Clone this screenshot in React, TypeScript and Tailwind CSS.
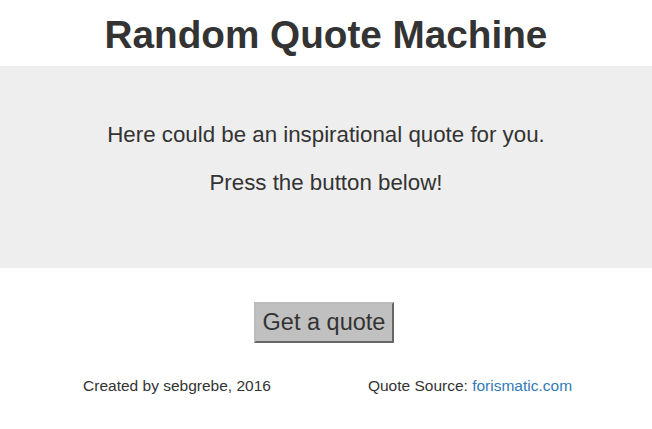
const App = () => {
    return (
        <div className="min-h-screen bg-white text-[#333] font-['Helvetica_Neue','Liberation_Sans',Arial,sans-serif]">
            <h1 className="pt-[13px] pb-[10px] text-center text-[38.7px] leading-[43px] font-bold">
                Random Quote Machine
            </h1>
            <div className="flex h-[202px] flex-col items-center justify-center gap-[22px] bg-[#eee] pb-[16px] text-[22.3px] leading-[26px]">
                <p>Here could be an inspirational quote for you.</p>
                <p>Press the button below!</p>
            </div>
            <div className="flex justify-center pt-[34px]">
                <button className="-ml-[4px] h-[41px] border-2 border-[#bbb] border-r-[#666] border-b-[#666] bg-[#c0c0c0] px-[7px] text-[23.5px] leading-none">
                    Get a quote
                </button>
            </div>
            <div className="mx-auto mt-[32px] grid w-[588px] grid-cols-2 text-center text-[15.5px] leading-[22px]">
                <p className="-ml-[4px]">Created by sebgrebe, 2016</p>
                <p className="-ml-[6px]">
                    Quote Source:{" "}
                    <a href="#" className="text-[#337ab7]">
                        forismatic.com
                    </a>
                </p>
            </div>
        </div>
    );
};

export default App;
